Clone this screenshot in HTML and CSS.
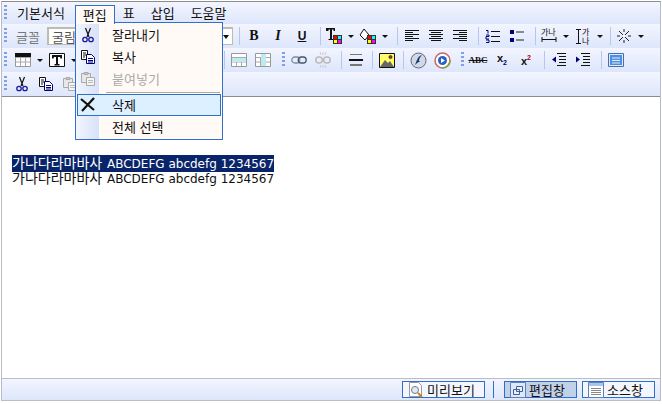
FILE: index.html
```html
<!DOCTYPE html>
<html lang="ko">
<head>
  <meta charset="UTF-8" />
  <title>웹 에디터</title>
  <link rel="stylesheet" href="styles.css">
</head>
<body>
  <svg class="defs" width="0" height="0">
    <symbol id="i-cut" viewBox="0 0 16 16">
      <path d="M5.500 1l3.500 9M10.500 1L7 10" stroke="#111" stroke-width="1.200" fill="none"/>
      <circle cx="5" cy="12.500" r="2.200" fill="none" stroke="#1a1a9c" stroke-width="1.300"/>
      <circle cx="11" cy="12.500" r="2.200" fill="none" stroke="#1a1a9c" stroke-width="1.300"/>
    </symbol>
    <symbol id="i-copy" viewBox="0 0 16 16">
      <path d="M1.500 1.500h6v9h-6z" fill="#fff" stroke="#111"/>
      <path d="M3 4h3M3 6h3M3 8h2" stroke="#111"/>
      <path d="M6.500 5.500h5l3 3v6h-8z" fill="#fff" stroke="#00007a"/>
      <path d="M8 9.500h5M8 11.500h5M8 13h5" stroke="#00007a"/>
    </symbol>
    <symbol id="i-paste" viewBox="0 0 16 16">
      <path d="M1.500 2.500h9v9h-9z" fill="#e8e8e8" stroke="#aaa"/>
      <path d="M4 1.500h4v2h-4z" fill="#ccc" stroke="#aaa"/>
      <path d="M6.500 6.500h8v8h-8z" fill="#f4f4f4" stroke="#aaa"/>
      <path d="M8 9.500h5M8 11.500h5" stroke="#bbb"/>
    </symbol>
    <symbol id="i-grid" viewBox="0 0 16 14">
      <path d="M.5 .5h15v13H.5z" fill="#fff" stroke="#999"/>
      <path d="M1 4.500h14M1 9h14M5.500 4v9M10.500 4v9" stroke="#aaa"/>
    </symbol>
    <symbol id="i-swatch" viewBox="0 0 9 9">
      <path d="M0 0h9v9H0z" fill="#333"/>
      <path d="M1 1h3v3H1z" fill="#f00"/><path d="M5 1h3v3H5z" fill="#0ff"/>
      <path d="M1 5h3v3H1z" fill="#ff0"/><path d="M5 5h3v3H5z" fill="#f0f"/>
    </symbol>
    <symbol id="i-lines" viewBox="0 0 16 12">
      <path d="M1 .5h14M1 2.500h14M1 4.500h14M1 6.500h14M1 8.500h14M1 10.500h14" stroke="#111"/>
    </symbol>
  </svg>

  <div class="editor">
    <div class="toolbar">
      <div class="tb-row menubar">
        <span class="grip"></span>
        <a class="menu-item">기본서식</a>
        <a class="menu-item open">편집</a>
        <a class="menu-item">표</a>
        <a class="menu-item">삽입</a>
        <a class="menu-item">도움말</a>
      </div>

      <div class="tb-row">
        <span class="grip"></span>
        <span class="field-label">글꼴</span>
        <div class="select"><span>굴림</span><span class="caret"></span></div>
        <span class="sep"></span>
        <span class="ic"><b class="fmt">B</b></span>
        <span class="ic"><i class="fmt">I</i></span>
        <span class="ic"><b class="fmt under">U</b></span>
        <span class="sep"></span>
        <span class="ic narrow">
          <svg width="18" height="18" viewBox="0 0 18 18"><path d="M1 1h9v3H8.500V2.500H7V12h1.500v1h-5v-1H5V2.500H3.500V4H1z" fill="#111"/><use href="#i-swatch" x="8" y="8" width="9" height="9"/></svg>
        </span>
        <span class="dd"></span>
        <span class="ic narrow">
          <svg width="18" height="18" viewBox="0 0 18 18"><path d="M5 2l5 6-4 5-5-5z" fill="#fff" stroke="#111"/><use href="#i-swatch" x="8" y="8" width="9" height="9"/></svg>
        </span>
        <span class="dd"></span>
        <span class="sep"></span>
        <span class="ic"><svg width="16" height="12"><use href="#i-lines"/><path d="M9 2.500h6M9 6.500h6M9 10.500h6" stroke="#e4eafc"/></svg></span>
        <span class="ic"><svg width="16" height="12"><use href="#i-lines"/><path d="M1 2.500h2M13 2.500h2M1 6.500h2M13 6.500h2M1 10.500h2M13 10.500h2" stroke="#e4eafc"/></svg></span>
        <span class="ic"><svg width="16" height="12"><use href="#i-lines"/><path d="M1 2.500h6M1 6.500h6M1 10.500h6" stroke="#e4eafc"/></svg></span>
        <span class="sep"></span>
        <span class="ic"><svg width="16" height="14"><path d="M1 1.500h2v3M1 6h3v1.500H1V10h3M1 11h3v2.500H1" stroke="#00007a" fill="none"/><path d="M6 2.500h9M6 7.500h9M6 12.500h9" stroke="#111"/></svg></span>
        <span class="ic"><svg width="16" height="14"><path d="M1 1h4v4H1zM1 9h4v4H1z" fill="#00007a"/><path d="M7 3h8M7 11h8" stroke="#222" stroke-width="1"/></svg></span>
        <span class="sep"></span>
        <span class="ic narrow"><svg width="16" height="16"><text x="0" y="7" class="tiny">가나</text><path d="M1 9v5M15 9v5M1 11.500h14" stroke="#111"/></svg></span>
        <span class="dd"></span>
        <span class="ic narrow"><svg width="16" height="17"><text x="7" y="7" class="tiny">가</text><text x="7" y="16" class="tiny">나</text><path d="M1 1.500h5M1 15.500h5M3.500 2v13" stroke="#111"/></svg></span>
        <span class="dd"></span>
        <span class="sep tight"></span>
        <span class="ic narrow"><svg width="14" height="14"><path d="M2 2l10 10M12 2L2 12M7 0v3M7 11v3M0 7h3M11 7h3" stroke="#222"/><path d="M6 6h2v2H6z" fill="#fff"/></svg></span>
        <span class="dd"></span>
      </div>

      <div class="tb-row">
        <span class="grip"></span>
        <span class="ic narrow first"><svg width="16" height="14"><use href="#i-grid"/><path d="M0 0h16v4H0z" fill="#111"/></svg></span>
        <span class="dd"></span>
        <span class="ic narrow"><svg width="16" height="14"><path d="M.5 .5h15v13H.5z" fill="#fff" stroke="#111"/><path d="M3 2h10v3.500h-1.500L11 4H9v7h1.500v1.500h-5V11H7V4H5l-.5 1.500H3z" fill="#111"/></svg></span>
        <span class="dd"></span>
        <span class="hidden-run"></span>
        <span class="sep"></span>
        <span class="ic"><svg width="16" height="14"><use href="#i-grid"/><path d="M1 5h14v4H1z" fill="#bfeaf2"/></svg></span>
        <span class="ic"><svg width="16" height="14"><use href="#i-grid"/><path d="M6 1h5v12H6z" fill="#bfeaf2"/></svg></span>
        <span class="grip inline"></span>
        <span class="ic"><svg width="16" height="10"><rect x=".8" y="2" width="8" height="6" rx="3" fill="none" stroke="#7c8ca8" stroke-width="1.300"/><rect x="7.200" y="2" width="8" height="6" rx="3" fill="none" stroke="#46536e" stroke-width="1.300"/></svg></span>
        <span class="ic"><svg width="16" height="16"><rect x=".8" y="5" width="6.500" height="6" rx="3" fill="none" stroke="#bbb" stroke-width="1.500"/><rect x="8.700" y="5" width="6.500" height="6" rx="3" fill="none" stroke="#bbb" stroke-width="1.500"/><path d="M5 0l1 3M11 0l-1 3M5 16l1-3M11 16l-1-3M8 0v3M8 13v3" stroke="#ccc"/></svg></span>
        <span class="sep"></span>
        <span class="ic"><svg width="16" height="12"><path d="M2 .5h12M2 10.500h12M2 11.500h12" stroke="#777"/><path d="M1 5h14v2H1z" fill="#111"/></svg></span>
        <span class="sep tight"></span>
        <span class="ic"><svg width="16" height="15"><path d="M.5 .5h15v14H.5z" fill="#ffff66" stroke="#111"/><circle cx="11.500" cy="4" r="1.600" fill="#a33" stroke="#111" stroke-width=".6"/><path d="M1 14l5-7 3 3 2-2 4 6z" fill="#666"/></svg></span>
        <span class="sep tight"></span>
        <span class="ic"><svg width="17" height="17"><circle cx="8.500" cy="8.500" r="7.500" fill="#cfd8e4" stroke="#667"/><path d="M12 3C8 4 7 8 5 13c2-2 3-3 4-3l1-1-1 0c0-2 1-4 3-6z" fill="#123a74"/></svg></span>
        <span class="ic"><svg width="17" height="17"><circle cx="8.500" cy="8.500" r="7.500" fill="#fff" stroke="#c66" stroke-width="1.500"/><path d="M16 8.500a7.500 7.500 0 0 1-7.500 7.500" fill="none" stroke="#7a3" stroke-width="1.500"/><circle cx="8.500" cy="8.500" r="4.500" fill="#2c5fc4"/><path d="M7 6l4 2.500L7 11z" fill="#fff"/></svg></span>
        <span class="grip inline"></span>
        <span class="ic"><s class="abc">ABC</s></span>
        <span class="ic"><span class="scr">x<sub>2</sub></span></span>
        <span class="ic"><span class="scr">x<sup>2</sup></span></span>
        <span class="sep"></span>
        <span class="ic"><svg width="16" height="14"><path d="M6 .5h9M8 3.500h7M8 6.500h7M8 9.500h7M6 12.500h9" stroke="#111"/><path d="M1 6.500l4-3v6z" fill="#00007a"/></svg></span>
        <span class="ic"><svg width="16" height="14"><path d="M6 .5h9M8 3.500h7M8 6.500h7M8 9.500h7M6 12.500h9" stroke="#111"/><path d="M5 6.500l-4-3v6z" fill="#00007a"/></svg></span>
        <span class="sep"></span>
        <span class="ic"><svg width="16" height="14"><path d="M.5 .5h15v13H.5z" fill="#dfe8f8" stroke="#4a6fa8"/><path d="M2 2h12v10H2z" fill="#4f8fe0"/><path d="M4 5h8M4 7.500h8M4 10h8" stroke="#dfeeff"/></svg></span>
      </div>

      <div class="tb-row">
        <span class="grip"></span>
        <span class="ic"><svg width="16" height="16"><use href="#i-cut"/></svg></span>
        <span class="ic"><svg width="16" height="16"><use href="#i-copy"/></svg></span>
        <span class="ic"><svg width="16" height="16"><use href="#i-paste"/></svg></span>
      </div>
    </div>

    <div class="content">
      <div class="text-line"><span class="selected"><span class="ko">가나다라마바사</span> ABCDEFG abcdefg 1234567</span></div>
      <div class="text-line"><span class="ko">가나다라마바사</span> ABCDEFG abcdefg 1234567</div>
    </div>

    <div class="statusbar">
      <a class="mode-btn preview">
        <svg width="16" height="16"><path d="M1.500 .5h9l3 3v11h-12z" fill="#fff" stroke="#999"/><circle cx="7" cy="8" r="3.500" fill="#dfeaf5" stroke="#778"/><path d="M10 11l4 4" stroke="#c8801c" stroke-width="2"/></svg>
        미리보기
      </a>
      <span class="status-sep"></span>
      <a class="mode-btn active">
        <svg width="16" height="16"><path d="M.5 .5h15v15H.5z" fill="#dfe8f8" stroke="#5b82bd"/><path d="M6.500 4.500h6v5h-6zM3.500 7.500h6v5h-6z" fill="#eef" stroke="#3d6299"/></svg>
        편집창
      </a>
      <a class="mode-btn">
        <svg width="16" height="16"><path d="M.5 .5h15v15H.5z" fill="#fff" stroke="#5b82bd"/><path d="M1 1h14v3H1z" fill="#a9c3ea"/><path d="M3 6.500h10M3 8.500h10M3 10.500h10M3 12.500h10" stroke="#888"/></svg>
        소스창
      </a>
    </div>
  </div>

  <div class="menu-panel">
    <div class="panel-item">
      <span class="panel-icon"><svg width="16" height="16"><use href="#i-cut"/></svg></span><span class="panel-text">잘라내기</span>
    </div>
    <div class="panel-item">
      <span class="panel-icon"><svg width="16" height="16"><use href="#i-copy"/></svg></span><span class="panel-text">복사</span>
    </div>
    <div class="panel-item disabled">
      <span class="panel-icon"><svg width="16" height="16"><use href="#i-paste"/></svg></span><span class="panel-text">붙여넣기</span>
    </div>
    <div class="panel-line"></div>
    <div class="panel-item hover">
      <span class="panel-icon"><svg width="16" height="16"><path d="M1 2l13 11M14 1L2 14" stroke="#111" stroke-width="2.200"/></svg></span><span class="panel-text">삭제</span>
    </div>
    <div class="panel-item">
      <span class="panel-icon"></span><span class="panel-text">전체 선택</span>
    </div>
  </div>
</body>
</html>
```

FILE: styles.css
```css
html, body {
  margin: 0;
  padding: 0;
  background: #fff;
  font-family: 'Noto Sans CJK KR', 'Liberation Sans', sans-serif;
  font-size: 13px;
  color: #111;
  overflow: hidden;
}

.defs {
  position: absolute;
}

.editor {
  box-sizing: border-box;
  width: 660px;
  height: 400px;
  margin: 1px;
  display: flex;
  flex-direction: column;
  border: 1px solid #bcbcc4;
  border-top-color: #8c8c8c;
}

.toolbar {
  border-bottom: 1px solid #8c8c8c;
  overflow: hidden;
}

.tb-row {
  display: flex;
  align-items: center;
  height: 24px;
  background: linear-gradient(#f3f5ff, #dde6fb);
}

.menubar {
  height: 22px;
}

.grip {
  width: 3px;
  height: 16px;
  margin: 0 3px 0 2px;
  flex: none;
  background: repeating-linear-gradient(#7f9fe6 0 2px, transparent 2px 4px);
}

.grip.inline {
  margin: 0 2px 0 7px;
}

.menu-item {
  padding: 0 8px;
  line-height: 18px;
}

.menubar .menu-item:first-of-type {
  margin-right: 2px;
  padding-left: 7px;
}

.menu-item.open {
  position: relative;
  z-index: 3;
  height: 18px;
  padding: 0 7px;
  margin-top: 2px;
  border: 2px solid #3170c8;
  border-width: 1px 1px 0;
  background: #fffaf5;
}

.field-label {
  width: 31px;
  margin-left: 6px;
  color: #777;
}

.select {
  box-sizing: border-box;
  width: 186px;
  height: 18px;
  padding: 0 3px;
  display: flex;
  align-items: center;
  justify-content: space-between;
  background: #fff;
  border: 1px solid #bdbdae;
  border-width: 2px 1px 1px 2px;
  color: #555;
}

.caret {
  width: 0;
  height: 0;
  border: 3px solid transparent;
  border-top: 4px solid #111;
  border-bottom: 0;
}

.sep {
  width: 1px;
  height: 18px;
  margin: 0 2px 0 6px;
  flex: none;
  background: #b4c8ef;
}

.sep.tight {
  margin-left: 4px;
}

.ic {
  width: 24px;
  height: 24px;
  flex: none;
  display: flex;
  align-items: center;
  justify-content: center;
}

.ic svg {
  overflow: visible;
}

.ic.narrow {
  width: 22px;
}

.ic.first {
  margin-left: 2px;
}

.dd {
  width: 12px;
  height: 24px;
  flex: none;
  display: flex;
  align-items: center;
  justify-content: center;
}

.dd::after {
  content: "";
  border: 3px solid transparent;
  border-top: 3px solid #111;
  border-bottom: 0;
}

.hidden-run {
  width: 138px;
  flex: none;
}

.fmt {
  font-family: 'Liberation Serif', serif;
  font-size: 14px;
  font-weight: bold;
  color: #111;
}

.under {
  text-decoration: underline;
  font-family: 'Liberation Sans', sans-serif;
  font-size: 12px;
}

.abc {
  font-family: 'Liberation Serif', serif;
  font-size: 9px;
  font-weight: bold;
}

.scr {
  font-family: 'Liberation Sans', sans-serif;
  font-size: 11px;
  font-weight: bold;
  line-height: 1;
}

.scr sub {
  font-size: 7px;
  color: #00007a;
}

.scr sup {
  font-size: 7px;
  color: #a00000;
}

.tiny {
  font-size: 8px;
  fill: #111;
}

.content {
  flex: 1;
  padding: 58px 0 0 10px;
  font-family: 'DejaVu Sans', sans-serif;
  font-size: 12px;
  line-height: 15px;
  color: #111;
}

.text-line {
  height: 15px;
  white-space: nowrap;
}

.selected {
  display: inline-block;
  background: #0a246a;
  color: #fff;
}

.ko {
  margin-right: 1px;
  font-family: 'Noto Sans CJK KR', sans-serif;
  font-size: 14px;
}

.statusbar {
  display: flex;
  align-items: center;
  justify-content: flex-end;
  height: 21px;
  padding-right: 5px;
  border-top: 1px solid #bcbcc4;
  background: linear-gradient(#f3f5ff, #dde6fb);
}

.mode-btn {
  box-sizing: border-box;
  width: 73px;
  height: 17px;
  padding-left: 5px;
  display: flex;
  align-items: center;
  gap: 3px;
  border: 1px solid #2f6fc9;
  background: #f4f6fe;
}

.mode-btn.preview {
  width: 83px;
}

.mode-btn.active {
  margin-right: 5px;
  background: #c2d1ea;
}

.status-sep {
  width: 1px;
  height: 17px;
  margin: 0 10px 0 8px;
  background: #2f6fc9;
}

.menu-panel {
  position: absolute;
  left: 75px;
  top: 22px;
  z-index: 2;
  box-sizing: border-box;
  width: 148px;
  height: 118px;
  padding: 1px 1px 0;
  border: 1px solid #3170c8;
  background: linear-gradient(90deg, #f2f5fe, #d7e1f8) 0 0 / 23px 100% no-repeat, #fffaf5;
}

.panel-item {
  box-sizing: border-box;
  height: 22px;
  display: flex;
  align-items: center;
  border: 1px solid transparent;
}

.panel-icon {
  width: 34px;
  flex: none;
  display: flex;
  padding-left: 2px;
  box-sizing: border-box;
}

.panel-text {
  margin-bottom: 2px;
}

.panel-item.disabled {
  color: #aaa;
}

.panel-item.hover {
  border-color: #3170c8;
  background: #dcf0ff;
}

.panel-line {
  height: 1px;
  margin: 2px 1px 1px 29px;
  background: #aaa;
}
```
